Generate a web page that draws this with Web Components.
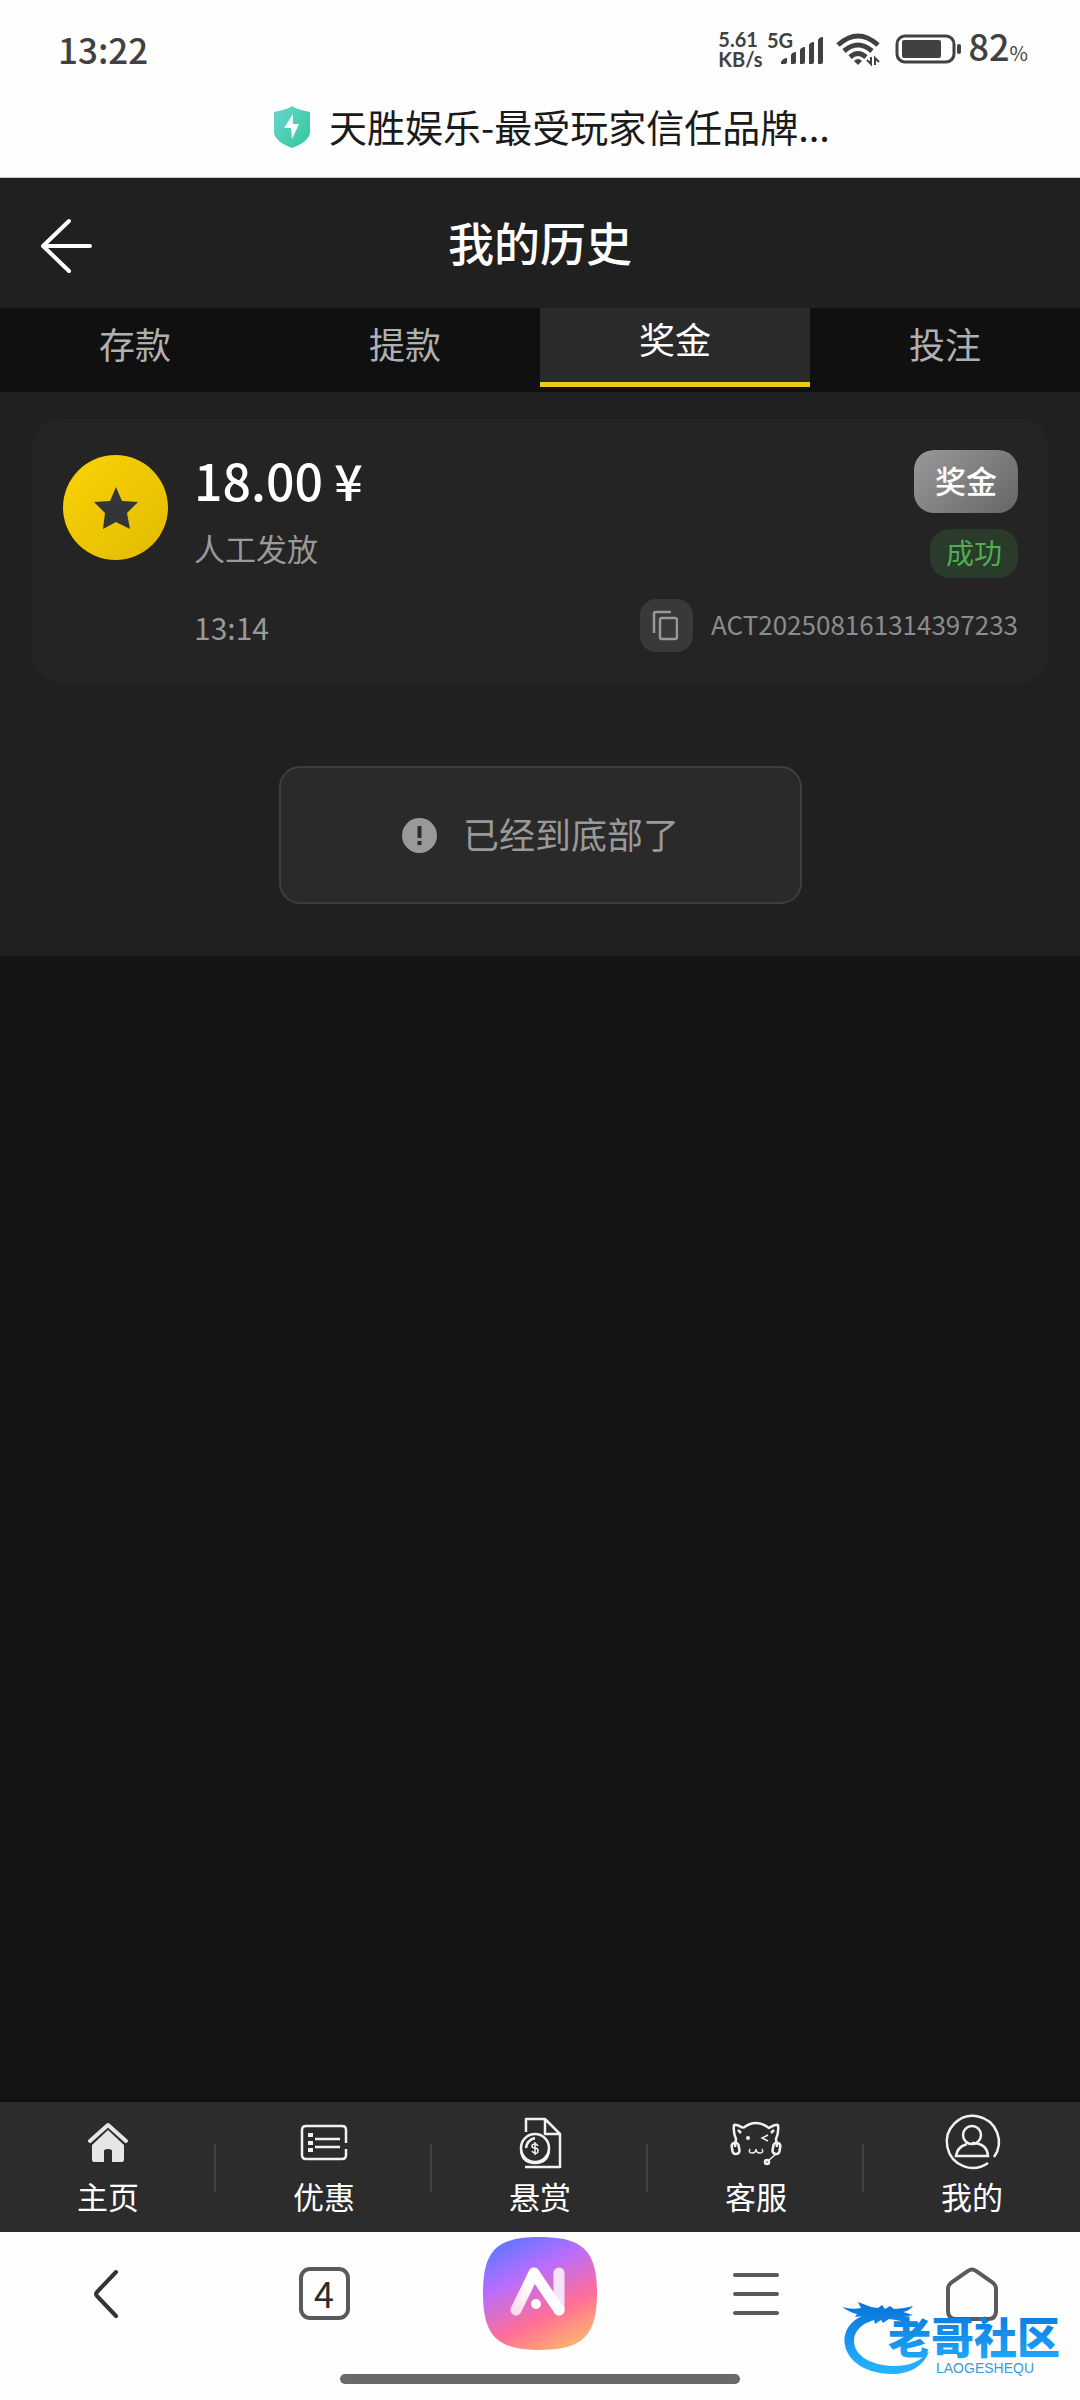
<!DOCTYPE html>
<html lang="zh-CN">
<head>
<meta charset="utf-8">
<meta name="viewport" content="width=device-width, initial-scale=1">
<title>我的历史</title>
<style>
  body {
    margin: 0;
    min-height: 100vh;
    display: flex;
    flex-direction: column;
    position: relative;
    background: #151515;
    color: #fff;
    font-family: "Noto Sans CJK SC", "Noto Sans", sans-serif;
  }
  main {
    flex: 1;
  }
  .history {
    background: #202020;
    padding: 27px 31px 52px 32px;
  }
  site-watermark {
    position: absolute;
    right: 12px;
    bottom: 20px;
  }
</style>
</head>
<body>
  <status-bar time="13:22" battery="82"></status-bar>
  <page-title>天胜娱乐-最受玩家信任品牌...</page-title>
  <app-header>我的历史</app-header>
  <tab-bar>
    <tab-item>存款</tab-item>
    <tab-item>提款</tab-item>
    <tab-item active>奖金</tab-item>
    <tab-item>投注</tab-item>
  </tab-bar>
  <main>
    <div class="history">
      <history-card order="ACT202508161314397233">
        <span slot="amount">18.00 ¥</span>
        <span slot="note">人工发放</span>
        <span slot="type">奖金</span>
        <span slot="status">成功</span>
        <time slot="time">13:14</time>
      </history-card>
      <end-notice>已经到底部了</end-notice>
    </div>
  </main>
  <bottom-nav>
    <nav-item icon="home">主页</nav-item>
    <nav-item icon="offers">优惠</nav-item>
    <nav-item icon="bounty">悬赏</nav-item>
    <nav-item icon="support">客服</nav-item>
    <nav-item icon="me">我的</nav-item>
  </bottom-nav>
  <browser-bar tabs="4"></browser-bar>
  <site-watermark></site-watermark>

<script>
  // Phone status bar
  class StatusBar extends HTMLElement {
    constructor() {
      super();
      this.attachShadow({ mode: 'open' });
    }

    connectedCallback() {
      const time = this.getAttribute('time') || '00:00';
      const battery = this.getAttribute('battery') || '100';
      this.shadowRoot.innerHTML = `
        <style>
          :host {
            display: flex;
            align-items: center;
            justify-content: space-between;
            height: 98px;
            padding: 0 52px 0 58px;
            background: #fefefe;
            color: #414141;
          }
          .time, .level {
            font-size: 36px;
            line-height: 48px;
            font-weight: 500;
          }
          .time {
            font-size: 35px;
          }
          .right {
            display: flex;
            align-items: center;
          }
          .speed {
            font-family: Lato, sans-serif;
            font-size: 20px;
            line-height: 20px;
            font-weight: 700;
            margin-right: 4px;
          }
          .speed span {
            display: block;
          }
          .signal { margin-right: 12px; }
          .wifi { margin-right: 15px; }
          .battery { margin-right: 7px; }
          svg {
            display: block;
            overflow: visible;
          }
          small {
            font-size: 20px;
            font-weight: 400;
          }
        </style>
        <span class="time">${time}</span>
        <div class="right">
          <div class="speed"><span>5.61</span><span>KB/s</span></div>
          <svg class="signal" width="57" height="32" viewBox="0 0 57 32" fill="#414141">
            <text x="0" y="15" font-family="Lato, sans-serif" font-size="20" font-weight="700">5G</text>
            <path d="M14 31v-2q2-4 6-4v4q0 2-2 2zM24 31V22q1-3 5-3v10q0 2-2 2zM33 31V17q1-3 5-3v15q0 2-2 2zM42 31V12q1-3 5-3v20q0 2-2 2zM51 31V7q1-3 5-3v25q0 2-2 2z"/>
          </svg>
          <svg class="wifi" width="44" height="33" viewBox="0 0 44 33" fill="none" stroke="#414141" stroke-width="5">
            <path d="M2 12Q22-6 42 12M8 18Q22 6 36 18M14 24Q22 17 30 24"/>
            <path d="M22 32l-4-4q4-4 8 0z" fill="#414141" stroke="none"/>
            <path d="M35 24v7l-4-4M39 32v-7l4 4" stroke-width="2"/>
          </svg>
          <svg class="battery" width="67" height="30" viewBox="0 0 67 30">
            <rect x="2" y="2" width="57" height="26" rx="8" fill="none" stroke="#414141" stroke-width="3"/>
            <rect x="7" y="6" width="39" height="18" rx="2" fill="#414141"/>
            <rect x="62" y="10" width="4" height="10" rx="2" fill="#414141"/>
          </svg>
          <span class="level">${battery}<small>%</small></span>
        </div>
      `;
    }
  }
  customElements.define('status-bar', StatusBar);

  // Title of the open web page, with the safe-site shield
  class PageTitle extends HTMLElement {
    constructor() {
      super();
      this.attachShadow({ mode: 'open' });
      this.shadowRoot.innerHTML = `
        <style>
          :host {
            display: flex;
            justify-content: center;
            align-items: center;
            gap: 18px;
            height: 79px;
            padding-left: 24px;
            border-bottom: 1px solid #c9c9c9;
            background: #fefefe;
            color: #1a1a1a;
            font-size: 38px;
            line-height: 60px;
          }
          .text { padding-bottom: 24px; }
          svg { margin-bottom: 22px; }
        </style>
        <svg width="37" height="42" viewBox="0 0 37 42">
          <defs>
            <linearGradient id="s" x1="0" y1="0" x2="1" y2="1">
              <stop offset="0" stop-color="#6bd5cf"/>
              <stop offset="1" stop-color="#2fc79a"/>
            </linearGradient>
          </defs>
          <path d="M18 0q3 3 18 6v20q0 9-18 16Q0 35 0 26V6Q15 3 18 0z" fill="url(#s)"/>
          <path d="M19 8l-9 14h7l1 11 7-15h-6z" fill="#fff"/>
        </svg>
        <span class="text"><slot></slot></span>
      `;
    }
  }
  customElements.define('page-title', PageTitle);

  class AppHeader extends HTMLElement {
    constructor() {
      super();
      this.attachShadow({ mode: 'open' });
      this.shadowRoot.innerHTML = `
        <style>
          :host {
            display: grid;
            grid-template-columns: 92px 1fr 92px;
            align-items: center;
            height: 130px;
            background: #202020;
          }
          button {
            border: 0;
            padding: 6px 0 0 40px;
            background: none;
            cursor: pointer;
          }
          svg { display: block; }
          h1 {
            margin: 0;
            padding-bottom: 4px;
            text-align: center;
            font-size: 46px;
            line-height: 60px;
            font-weight: 500;
          }
        </style>
        <button aria-label="返回">
          <svg width="52" height="56" viewBox="0 0 52 56" fill="none" stroke="#fff" stroke-width="4" stroke-linecap="round" stroke-linejoin="round">
            <path d="M29 3L3 28l26 25M4 28h46"/>
          </svg>
        </button>
        <h1><slot></slot></h1>
      `;
    }
  }
  customElements.define('app-header', AppHeader);

  class TabBar extends HTMLElement {
    constructor() {
      super();
      this.attachShadow({ mode: 'open' });
      this.shadowRoot.innerHTML = `
        <style>
          :host {
            display: grid;
            grid-auto-flow: column;
            grid-auto-columns: 1fr;
            height: 84px;
            background: #101010;
          }
        </style>
        <slot></slot>
      `;
    }
  }
  customElements.define('tab-bar', TabBar);

  class TabItem extends HTMLElement {
    constructor() {
      super();
      this.attachShadow({ mode: 'open' });
      this.shadowRoot.innerHTML = `
        <style>
          :host { display: block; }
          button {
            display: block;
            width: 100%;
            height: 70px;
            border: 0;
            padding: 0;
            background: none;
            color: #b0b0b0;
            font: inherit;
            font-size: 36px;
            line-height: 60px;
            cursor: pointer;
          }
          :host([active]) button {
            height: 79px;
            border-bottom: 5px solid #ecca1a;
            background: #2a2a2a;
            color: #fff;
            line-height: 60px;
            padding-bottom: 16px;
          }
        </style>
        <button><slot></slot></button>
      `;
    }
  }
  customElements.define('tab-item', TabItem);

  // One record in the history list
  class HistoryCard extends HTMLElement {
    constructor() {
      super();
      this.attachShadow({ mode: 'open' });
    }

    connectedCallback() {
      const order = this.getAttribute('order') || '';
      this.shadowRoot.innerHTML = `
        <style>
          :host {
            display: grid;
            grid-template-columns: 105px 1fr auto;
            column-gap: 26px;
            padding: 31px;
            border-radius: 28px;
            background: #242424;
          }
          .icon {
            display: grid;
            place-items: center;
            width: 105px;
            height: 105px;
            margin-top: 5px;
            border-radius: 50%;
            background: linear-gradient(135deg, #fad206, #e2bb00);
          }
          .amount {
            font-size: 50px;
            line-height: 58px;
            font-weight: 500;
          }
          .note {
            margin-top: 20px;
            font-size: 31px;
            line-height: 40px;
            color: #999;
          }
          .tags {
            display: flex;
            flex-direction: column;
            align-items: flex-end;
            gap: 16px;
          }
          .type, .status {
            border-radius: 20px;
          }
          .type {
            padding: 0 21px 3px;
            background: linear-gradient(135deg, #999, #666);
            font-size: 31px;
            line-height: 60px;
            font-weight: 500;
          }
          .status {
            padding: 0 16px 2px;
            background: #2a3b2b;
            color: #4caf50;
            font-size: 28px;
            line-height: 47px;
          }
          .foot {
            grid-column: 2 / 4;
            display: flex;
            justify-content: space-between;
            align-items: center;
            margin-top: 21px;
            color: #999;
          }
          .time {
            font-size: 30px;
            line-height: 40px;
            padding-top: 3px;
          }
          .order {
            display: flex;
            align-items: center;
            gap: 18px;
            font-size: 26px;
            line-height: 40px;
            color: #8c8c8c;
          }
          .order span {
            padding-bottom: 3px;
          }
          button {
            display: grid;
            place-items: center;
            width: 53px;
            height: 53px;
            border: 0;
            border-radius: 16px;
            padding: 0 4px 0 0;
            background: #393939;
            cursor: pointer;
          }
        </style>
        <div class="icon">
          <svg width="44" height="42" viewBox="0 0 44 42">
            <path d="M22 0l6 14 16 1-11 11 3 16-14-7-13 7 2-16L0 15l16-1z" fill="#333639"/>
          </svg>
        </div>
        <div>
          <div class="amount"><slot name="amount"></slot></div>
          <div class="note"><slot name="note"></slot></div>
        </div>
        <div class="tags">
          <div class="type"><slot name="type"></slot></div>
          <div class="status"><slot name="status"></slot></div>
        </div>
        <div class="foot">
          <div class="time"><slot name="time"></slot></div>
          <div class="order">
            <button aria-label="复制">
              <svg width="26" height="31" viewBox="0 0 26 31" fill="none" stroke="#999" stroke-width="2.5">
                <path d="M2 23V4q0-2 2-2h15"/>
                <rect x="8" y="8" width="17" height="21" rx="2"/>
              </svg>
            </button>
            <span>${order}</span>
          </div>
        </div>
      `;
    }
  }
  customElements.define('history-card', HistoryCard);

  class EndNotice extends HTMLElement {
    constructor() {
      super();
      this.attachShadow({ mode: 'open' });
      this.shadowRoot.innerHTML = `
        <style>
          :host {
            display: flex;
            justify-content: center;
            margin-top: 83px;
          }
          .box {
            display: flex;
            align-items: center;
            gap: 26px;
            padding: 38px 121px;
            border: 2px solid #3e3e3e;
            border-radius: 21px;
            background: #2a2a2a;
            color: #999;
            font-size: 36px;
            line-height: 54px;
          }
          .text { padding-bottom: 4px; }
        </style>
        <div class="box">
          <svg width="35" height="35" viewBox="0 0 35 35">
            <circle cx="17.5" cy="17.5" r="17.5" fill="#999"/>
            <path d="M15.5 8h4v12h-4zM15.5 23h4v4h-4z" fill="#2a2a2a"/>
          </svg>
          <span class="text"><slot></slot></span>
        </div>
      `;
    }
  }
  customElements.define('end-notice', EndNotice);

  class BottomNav extends HTMLElement {
    constructor() {
      super();
      this.attachShadow({ mode: 'open' });
      this.shadowRoot.innerHTML = `
        <style>
          :host {
            display: block;
            background: #2c2c2c;
            box-shadow: 0 -2px 6px rgba(0, 0, 0, 0.4);
          }
          nav {
            display: grid;
            grid-auto-flow: column;
            grid-auto-columns: 1fr;
            align-items: center;
            height: 130px;
          }
          ::slotted(:not(:last-of-type)) {
            background: linear-gradient(#404040, #404040) right 42px / 2px 48px no-repeat;
          }
        </style>
        <nav><slot></slot></nav>
      `;
    }
  }
  customElements.define('bottom-nav', BottomNav);

  const navIcons = {
    home: `
      <path d="M9 27L27 11l18 16" stroke="#e6e6e6" stroke-width="4" stroke-linecap="round" stroke-linejoin="round"/>
      <path d="M27 16L43 31v15q0 2-2 2H31V37q0-2-4-2t-4 2v11H13q-2 0-2-2V31z" fill="#e6e6e6" stroke="none"/>`,
    offers: `
      <path d="M49 29V16q0-4-4-4H9q-4 0-4 4v25q0 4 4 4h36q4 0 4-4v-6M18 25h25M18 33h25"/>
      <path d="M11 19h5v4h-5zM11 27h5v4h-5zM11 34h5v4h-5z" fill="#f2f2f2" stroke="none"/>`,
    bounty: `
      <path d="M13 18V5h19l15 15v33H12M32 5v15h15" stroke-linejoin="round"/>
      <circle cx="22" cy="34" r="14"/>
      <path d="M8 36q1 13 14 13t14-13M13 34q1-8 9-10"/>
      <path d="M25 32q-1-2-3-2-3 0-3 2t3 2 3 3-3 2-3-2M22 28v13" stroke-width="1.5"/>`,
    support: `
      <path d="M14 14Q27 4 40 14q7-4 9-3 1 7-2 14l1 8M14 14Q7 10 5 11q-1 7 2 14l-1 8M9 16l3 3M45 16l-3 3" stroke-linejoin="round"/>
      <rect x="3" y="29" width="7" height="11" rx="3" transform="rotate(-10 6 34)"/>
      <rect x="44" y="29" width="7" height="11" rx="3" transform="rotate(10 48 34)"/>
      <path d="M47 40l-7 6M39 21l-6 3 6 3M21 35q-2 4 2 4t4-4q0 4 4 4t2-4" stroke-width="1.5"/>
      <circle cx="38" cy="48" r="2"/>
      <circle cx="19" cy="24" r="2" fill="#f2f2f2" stroke="none"/>`,
    me: `
      <path d="M49 43A26 26 0 1 0 43 49"/>
      <circle cx="27" cy="21" r="9"/>
      <path d="M22 30q-10 3-11 12h32q-1-13-16-13"/>`
  };

  class NavItem extends HTMLElement {
    constructor() {
      super();
      this.attachShadow({ mode: 'open' });
    }

    connectedCallback() {
      const icon = navIcons[this.getAttribute('icon')] || '';
      this.shadowRoot.innerHTML = `
        <style>
          :host {
            display: block;
            height: 130px;
          }
          a {
            display: flex;
            flex-direction: column;
            align-items: center;
            padding-top: 12px;
            color: #fff;
            text-decoration: none;
            font-size: 31px;
            line-height: 52px;
          }
          svg {
            display: block;
            overflow: visible;
          }
        </style>
        <a href="#">
          <svg width="54" height="56" viewBox="0 0 54 56" fill="none" stroke="#f2f2f2" stroke-width="2.5">${icon}</svg>
          <slot></slot>
        </a>
      `;
    }
  }
  customElements.define('nav-item', NavItem);

  // Browser toolbar and the gesture handle below it
  class BrowserBar extends HTMLElement {
    constructor() {
      super();
      this.attachShadow({ mode: 'open' });
    }

    connectedCallback() {
      const tabs = this.getAttribute('tabs') || '1';
      this.shadowRoot.innerHTML = `
        <style>
          :host {
            display: block;
            height: 168px;
            background: #fefefe;
          }
          .tools {
            display: grid;
            grid-template-columns: repeat(5, 1fr);
            height: 123px;
          }
          button {
            display: grid;
            place-items: center;
            border: 0;
            padding: 0;
            background: none;
            color: #2c2c2c;
            font: inherit;
            cursor: pointer;
          }
          .count {
            box-sizing: border-box;
            width: 51px;
            height: 53px;
            border: 4px solid #5a5a5a;
            border-radius: 11px;
            font-size: 36px;
            line-height: 42px;
          }
          .handle {
            width: 37%;
            height: 10px;
            margin: 19px auto 0;
            border-radius: 5px;
            background: #696969;
          }
        </style>
        <div class="tools">
          <button aria-label="后退">
            <svg width="32" height="52" viewBox="0 0 32 52" fill="none" stroke="#333" stroke-width="4" stroke-linecap="round">
              <path d="M24 4L5 24q-2 2 0 4l19 20"/>
            </svg>
          </button>
          <button aria-label="标签页"><span class="count">${tabs}</span></button>
          <button aria-label="AI">
            <svg width="114" height="113" viewBox="0 0 114 113">
              <defs>
                <linearGradient id="bg" x1="0.2" y1="0" x2="0.7" y2="1">
                  <stop offset="0" stop-color="#5a78ff"/>
                  <stop offset="0.33" stop-color="#b86dff"/>
                  <stop offset="0.7" stop-color="#ff6e97"/>
                  <stop offset="1" stop-color="#ffb16f"/>
                </linearGradient>
                <linearGradient id="leg" x1="0" y1="1" x2="1" y2="0">
                  <stop offset="0" stop-color="#fbdcee"/>
                  <stop offset="0.5" stop-color="#fff"/>
                  <stop offset="1" stop-color="#fff"/>
                </linearGradient>
              </defs>
              <path d="M57 0C100 0 114 14 114 56S100 113 57 113 0 99 0 56 14 0 57 0z" fill="url(#bg)"/>
              <g fill="none" stroke-width="11" stroke-linecap="round" stroke-linejoin="round">
                <path d="M76 36v37" stroke="#f4e4fa"/>
                <path d="M33 73L51 36l25 37" stroke="url(#leg)"/>
              </g>
              <circle cx="53" cy="67" r="5" fill="#fff"/>
            </svg>
          </button>
          <button aria-label="菜单">
            <svg width="48" height="44" viewBox="0 0 48 44" stroke="#5a5a5a" stroke-width="4" stroke-linecap="round">
              <path d="M3 3h42M3 22h42M3 41h42"/>
            </svg>
          </button>
          <button aria-label="主页">
            <svg width="52" height="54" viewBox="0 0 52 54" fill="none" stroke="#5a5a5a" stroke-width="4">
              <path d="M22 4q4-3 8 0l16 11q4 3 4 7v22q0 8-8 8H10q-8 0-8-8V22q0-4 4-7z"/>
            </svg>
          </button>
        </div>
        <div class="handle"></div>
      `;
    }
  }
  customElements.define('browser-bar', BrowserBar);

  class SiteWatermark extends HTMLElement {
    constructor() {
      super();
      this.attachShadow({ mode: 'open' });
      this.shadowRoot.innerHTML = `
        <style>
          :host {
            display: block;
            pointer-events: none;
          }
          svg { display: block; }
        </style>
        <svg width="226" height="80" viewBox="0 0 226 80" font-family="Noto Sans CJK SC, sans-serif">
          <defs>
            <linearGradient id="w" gradientUnits="userSpaceOnUse" x1="0" y1="5" x2="0" y2="72">
              <stop offset="0" stop-color="#0a76d8"/>
              <stop offset="0.5" stop-color="#1492ee"/>
              <stop offset="1" stop-color="#27b4ff"/>
            </linearGradient>
          </defs>
          <g fill="url(#w)">
            <path d="M36 11C12 15 0 29 3 45c3 17 22 29 47 29 18 0 32-8 37-23-8 10-19 15-34 15C30 66 12 56 12 41c0-12 11-20 29-24z"/>
            <path d="M0 7q10 3 19 1l-3-6 13 5 7 1 4-3 3 4 5-3 4 3q9 0 19-3-4 5-10 6l10 3-9 2 1 5-9-2-7-1-6 4-2-3-6 4-1-4-8 3 2-4-9 1 4-4-8 1 2-3Q9 13 0 7z"/>
            <text x="46" y="54" font-size="43" font-weight="900">老哥社区</text>
          </g>
          <text x="94" y="73" font-size="14" fill="#3b9be0" font-family="Liberation Sans, sans-serif">LAOGESHEQU</text>
        </svg>
      `;
    }
  }
  customElements.define('site-watermark', SiteWatermark);
</script>
</body>
</html>
